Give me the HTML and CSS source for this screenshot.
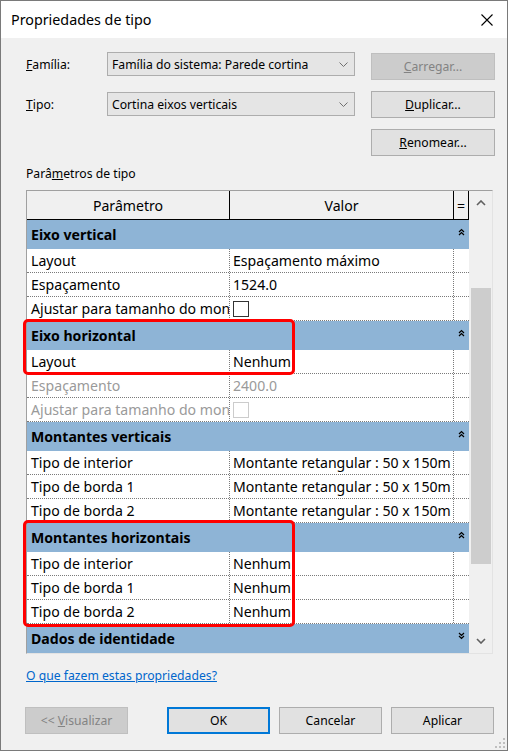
FILE: index.html
```html
<!DOCTYPE html>
<html lang="pt">
<head>
<meta charset="utf-8">
<title>Propriedades de tipo</title>
<link rel="stylesheet" href="styles.css">
</head>
<body>
<div class="window">
  <div class="titlebar">
    <span class="title">Propriedades de tipo</span>
    <svg class="close" width="12" height="12" viewBox="0 0 12 12"><path d="M0.5 0.5 L11.5 11.5 M11.5 0.5 L0.5 11.5" stroke="#000" stroke-width="1.1" fill="none"/></svg>
  </div>
  <div class="content">
    <div class="top">
      <div class="fields">
        <div class="field">
          <span class="label"><u>F</u>amília:</span>
          <div class="combo"><span>Família do sistema: Parede cortina</span><svg width="9" height="5" viewBox="0 0 9 5"><path d="M0.5 0.5 L4.5 4.5 L8.5 0.5" stroke="#707070" stroke-width="1" fill="none"/></svg></div>
        </div>
        <div class="field">
          <span class="label"><u>T</u>ipo:</span>
          <div class="combo"><span>Cortina eixos verticais</span><svg width="9" height="5" viewBox="0 0 9 5"><path d="M0.5 0.5 L4.5 4.5 L8.5 0.5" stroke="#707070" stroke-width="1" fill="none"/></svg></div>
        </div>
      </div>
      <div class="side">
        <div class="btn disabled"><span><u>C</u>arregar...</span></div>
        <div class="btn"><span><u>D</u>uplicar...</span></div>
        <div class="btn"><span><u>R</u>enomear...</span></div>
      </div>
    </div>
    <div class="section-label">Parâ<u>m</u>etros de tipo</div>
    <div class="frame">
      <div class="grid">
        <div class="row head">
          <div class="c1">Parâmetro</div>
          <div class="c2">Valor</div>
          <div class="c3">=</div>
        </div>

        <div class="row group"><div class="gname">Eixo vertical</div><div class="c3"><svg width="7" height="8" viewBox="0 0 7 8"><path d="M1 4 L3.5 1.5 L6 4 M1 7 L3.5 4.5 L6 7" stroke="#000" stroke-width="1.2" fill="none"/></svg></div></div>
        <div class="row"><div class="c1">Layout</div><div class="c2">Espaçamento máximo</div><div class="c3"></div></div>
        <div class="row"><div class="c1">Espaçamento</div><div class="c2">1524.0</div><div class="c3"></div></div>
        <div class="row"><div class="c1">Ajustar para tamanho do mon</div><div class="c2"><span class="check"></span></div><div class="c3"></div></div>

        <div class="row group"><div class="gname">Eixo horizontal</div><div class="c3"><svg width="7" height="8" viewBox="0 0 7 8"><path d="M1 4 L3.5 1.5 L6 4 M1 7 L3.5 4.5 L6 7" stroke="#000" stroke-width="1.2" fill="none"/></svg></div></div>
        <div class="row"><div class="c1">Layout</div><div class="c2">Nenhum</div><div class="c3"></div></div>
        <div class="row dim"><div class="c1">Espaçamento</div><div class="c2">2400.0</div><div class="c3"></div></div>
        <div class="row dim"><div class="c1">Ajustar para tamanho do mon</div><div class="c2"><span class="check"></span></div><div class="c3"></div></div>

        <div class="row group"><div class="gname">Montantes verticais</div><div class="c3"><svg width="7" height="8" viewBox="0 0 7 8"><path d="M1 4 L3.5 1.5 L6 4 M1 7 L3.5 4.5 L6 7" stroke="#000" stroke-width="1.2" fill="none"/></svg></div></div>
        <div class="row"><div class="c1">Tipo de interior</div><div class="c2">Montante retangular : 50 x 150m</div><div class="c3"></div></div>
        <div class="row"><div class="c1">Tipo de borda 1</div><div class="c2">Montante retangular : 50 x 150m</div><div class="c3"></div></div>
        <div class="row"><div class="c1">Tipo de borda 2</div><div class="c2">Montante retangular : 50 x 150m</div><div class="c3"></div></div>

        <div class="row group"><div class="gname">Montantes horizontais</div><div class="c3"><svg width="7" height="8" viewBox="0 0 7 8"><path d="M1 4 L3.5 1.5 L6 4 M1 7 L3.5 4.5 L6 7" stroke="#000" stroke-width="1.2" fill="none"/></svg></div></div>
        <div class="row"><div class="c1">Tipo de interior</div><div class="c2">Nenhum</div><div class="c3"></div></div>
        <div class="row"><div class="c1">Tipo de borda 1</div><div class="c2">Nenhum</div><div class="c3"></div></div>
        <div class="row"><div class="c1">Tipo de borda 2</div><div class="c2">Nenhum</div><div class="c3"></div></div>

        <div class="row group"><div class="gname">Dados de identidade</div><div class="c3"><svg width="7" height="8" viewBox="0 0 7 8"><path d="M1 1 L3.5 3.5 L6 1 M1 4 L3.5 6.5 L6 4" stroke="#000" stroke-width="1.2" fill="none"/></svg></div></div>
      </div>
      <div class="scrollbar">
        <div class="sb-btn up"><svg width="10" height="6" viewBox="0 0 10 6"><path d="M1 5 L5 1 L9 5" stroke="#606060" stroke-width="1.6" fill="none"/></svg></div>
        <div class="sb-track"><div class="thumb"></div></div>
        <div class="sb-btn down"><svg width="10" height="6" viewBox="0 0 10 6"><path d="M1 1 L5 5 L9 1" stroke="#606060" stroke-width="1.6" fill="none"/></svg></div>
      </div>
      <div class="mark mark-a"></div>
      <div class="mark mark-b"></div>
    </div>
    <a class="help" href="#">O que fazem estas propriedades?</a>
    <div class="footer">
      <div class="btn fbtn disabled first"><span>&lt;&lt; <u>V</u>isualizar</span></div>
      <div class="btn fbtn ok"><span>OK</span></div>
      <div class="btn fbtn"><span>Cancelar</span></div>
      <div class="btn fbtn"><span>Aplicar</span></div>
    </div>
  </div>
  <svg class="grip" width="10" height="10" viewBox="0 0 10 10"><g fill="#bfbfbf"><rect x="8" y="0" width="2" height="2"/><rect x="4" y="4" width="2" height="2"/><rect x="8" y="4" width="2" height="2"/><rect x="0" y="8" width="2" height="2"/><rect x="4" y="8" width="2" height="2"/><rect x="8" y="8" width="2" height="2"/></g></svg>
</div>
</body>
</html>
```

FILE: styles.css
```css
body {
  margin: 0;
  font-family: "Noto Sans", "Open Sans", sans-serif;
  color: #000;
}

.window {
  width: 508px;
  height: 751px;
  box-sizing: border-box;
  border: 1px solid #7a7a7a;
  background: #f0f0f0;
  position: relative;
  display: flex;
  flex-direction: column;
}

.titlebar {
  height: 37px;
  flex: none;
  background: #fff;
  display: flex;
  align-items: center;
  justify-content: space-between;
  padding: 0 14px 0 10px;
}

.title {
  font-size: 14.3px;
}

.close {
  display: block;
}

.content {
  padding: 14px 12px 0 25px;
  display: flex;
  flex-direction: column;
  font-size: 12.2px;
}

.top {
  display: flex;
  justify-content: space-between;
}

.fields {
  display: flex;
  flex-direction: column;
  gap: 16px;
}

.field {
  display: flex;
  align-items: center;
}

.label {
  width: 81px;
}

.combo {
  width: 248px;
  height: 24px;
  box-sizing: border-box;
  border: 1px solid #adadad;
  background: #e5e5e5;
  display: flex;
  align-items: center;
  justify-content: space-between;
  padding: 0 6px 0 4px;
}

.combo svg {
  display: block;
}

.side {
  width: 124px;
  margin-top: 1px;
  display: flex;
  flex-direction: column;
  gap: 11px;
}

.btn {
  height: 27px;
  box-sizing: border-box;
  border: 1px solid #adadad;
  background: #e1e1e1;
  display: flex;
  align-items: center;
  justify-content: center;
}

.btn.disabled {
  background: #cccccc;
  border-color: #bfbfbf;
  color: #838383;
}

.section-label {
  margin-top: 10px;
  line-height: 16px;
}

.frame {
  margin-top: 8px;
  width: 467px;
  height: 464px;
  box-sizing: border-box;
  border: 1px solid;
  border-color: #a0a0a0 #e3e3e3 #e3e3e3 #a0a0a0;
  display: flex;
  position: relative;
}

.grid {
  width: 442px;
  flex: none;
  background: #fff;
  overflow: hidden;
  display: flex;
  flex-direction: column;
  font-size: 14.1px;
}

.row {
  display: grid;
  grid-template-columns: 203px 224px 15px;
  height: 24px;
  flex: none;
  box-sizing: border-box;
  border-bottom: 1px dotted #7a7a7a;
}

.row > div {
  display: flex;
  align-items: center;
  white-space: nowrap;
  overflow: hidden;
  box-sizing: border-box;
}

.row .c1 {
  padding-left: 4px;
  border-right: 1px dotted #7a7a7a;
}

.row .c2 {
  padding-left: 3px;
  border-right: 1px dotted #7a7a7a;
}

.row.head {
  height: 29px;
  background: #f0f0f0;
  border-bottom: 1px solid #000;
}

.row.head > div {
  justify-content: center;
  padding-left: 0;
  border-right: 1px solid #000;
}

.row.group {
  height: 29px;
  background: #8eb4d6;
  border-bottom: none;
  font-weight: bold;
}

.row.group .gname {
  grid-column: 1 / span 2;
  padding-left: 4px;
  border-right: none;
}

.row.group .c3 {
  justify-content: center;
  align-items: flex-start;
  padding-top: 8px;
}

.row.group .c3 svg {
  display: block;
}

.row.dim {
  color: #9a9a9a;
}

.check {
  width: 14px;
  height: 14px;
  border: 1px solid #333;
  background: #fff;
  display: block;
}

.row.dim .check {
  border-color: #cccccc;
}

.scrollbar {
  width: 23px;
  flex: none;
  background: #f0f0f0;
  display: flex;
  flex-direction: column;
}

.sb-btn {
  display: flex;
  align-items: center;
  justify-content: center;
  padding-left: 1px;
}

.sb-btn.up {
  height: 24px;
}

.sb-btn.down {
  height: 25px;
}

.sb-btn svg {
  display: block;
}

.sb-track {
  flex: 1;
}

.thumb {
  margin: 73px 1px 0 2px;
  height: 276px;
  background: #cdcdcd;
}

.mark {
  position: absolute;
  left: -4px;
  width: 272px;
  box-sizing: border-box;
  border: 3px solid #ff0000;
  border-radius: 5px;
  pointer-events: none;
}

.mark-a {
  top: 128px;
  height: 56px;
}

.mark-b {
  top: 329px;
  height: 107px;
}

.help {
  margin-top: 14px;
  line-height: 16px;
  color: #0066cc;
  text-decoration: underline;
  align-self: flex-start;
}

.footer {
  margin-top: 23px;
  display: flex;
}

.fbtn {
  width: 103px;
  margin-left: 9px;
}

.fbtn.first {
  margin-left: -1px;
}

.fbtn.ok {
  margin-left: 39px;
  border: 2px solid #0078d7;
}

.grip {
  position: absolute;
  right: 2px;
  bottom: 2px;
}
```
